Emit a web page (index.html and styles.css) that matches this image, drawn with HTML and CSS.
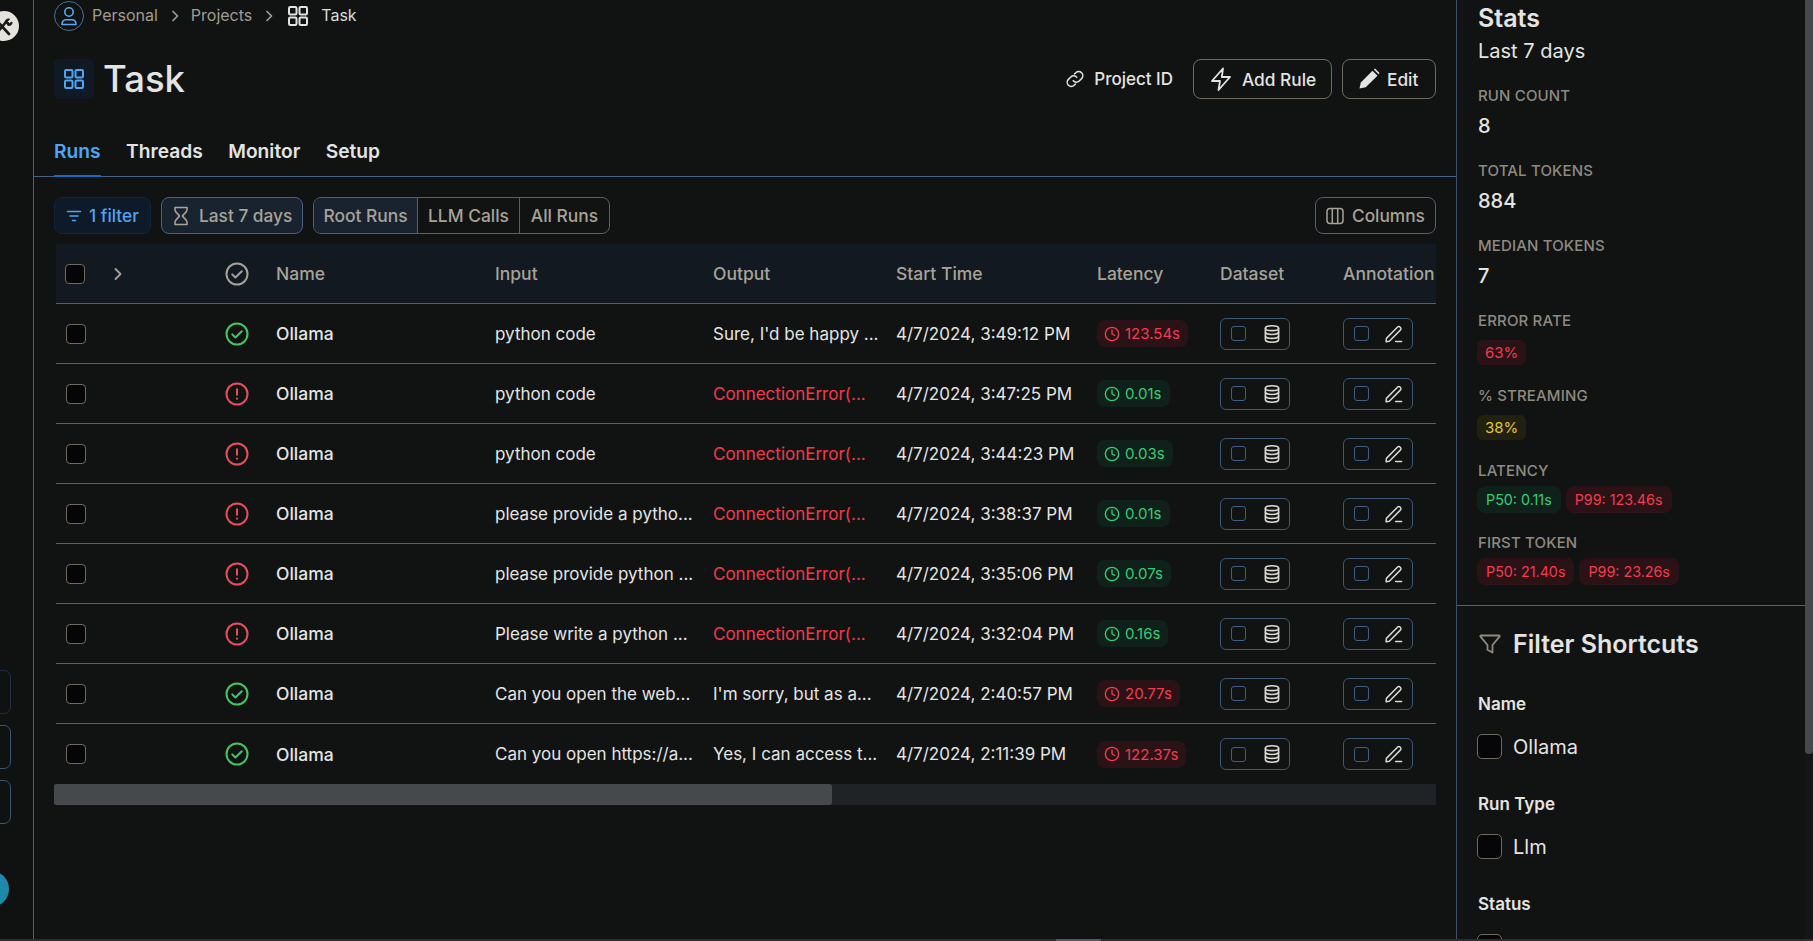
FILE: index.html
```html
<!DOCTYPE html>
<html lang="en">
<head>
<meta charset="utf-8">
<title>Task</title>
<link rel="stylesheet" href="styles.css">
</head>
<body>
<svg class="defs" width="0" height="0" aria-hidden="true">
  <symbol id="i-grid" viewBox="0 0 24 24" fill="none" stroke="currentColor" stroke-width="2" stroke-linejoin="round">
    <rect x="3" y="3" width="7.5" height="7.5" rx="1.2"/><rect x="13.5" y="3" width="7.5" height="7.5" rx="1.2"/><rect x="3" y="13.5" width="7.5" height="7.5" rx="1.2"/><rect x="13.5" y="13.5" width="7.5" height="7.5" rx="1.2"/>
  </symbol>
  <symbol id="i-check" viewBox="0 0 24 24" fill="none" stroke="currentColor" stroke-width="2" stroke-linecap="round" stroke-linejoin="round">
    <circle cx="12" cy="12" r="10.5"/><path d="M7.2 12.4l3.2 3.1 6.4-6.3"/>
  </symbol>
  <symbol id="i-alert" viewBox="0 0 24 24" fill="none" stroke="currentColor" stroke-width="2" stroke-linecap="round" stroke-linejoin="round">
    <circle cx="12" cy="12" r="10.5"/><path d="M12 7.2v5.6M12 16.6v.1"/>
  </symbol>
  <symbol id="i-clock" viewBox="0 0 24 24" fill="none" stroke="currentColor" stroke-width="2" stroke-linecap="round" stroke-linejoin="round">
    <circle cx="12" cy="12" r="10"/><path d="M12 6v6l4 2"/>
  </symbol>
  <symbol id="i-db" viewBox="0 0 16 18" fill="none" stroke="currentColor" stroke-width="1.6" stroke-linecap="round" stroke-linejoin="round">
    <ellipse cx="8" cy="3.2" rx="6.6" ry="2.4"/><path d="M1.4 3.2v11.6c0 1.3 3 2.4 6.6 2.4s6.6-1.1 6.6-2.4V3.2"/><path d="M1.4 7.1c0 1.3 3 2.4 6.6 2.4s6.6-1.1 6.6-2.4M1.4 11c0 1.3 3 2.4 6.6 2.4s6.6-1.1 6.6-2.4"/>
  </symbol>
  <symbol id="i-pen" viewBox="0 0 18 18" fill="none" stroke="currentColor" stroke-width="1.5" stroke-linecap="round" stroke-linejoin="round">
    <path d="M1.4 13.4L12.4 2.2a2 2 0 0 1 2.9 0 2 2 0 0 1 0 2.9L4.3 16.2l-3.2.6z"/><path d="M10.6 16.6h6"/>
  </symbol>
</svg>

<div class="app">
  <div class="workspace">
    <aside class="rail">
      <div class="rail-logo">
        <svg class="rail-tools" viewBox="0 0 20 20" fill="none" stroke="#1a1a1a" stroke-width="2.6" stroke-linecap="round"><path d="M2 18L12 6"/><path d="M3 5l12 13"/><path d="M11 6.5c0-2.5 2-4 4.500-3.500l-2 2.500 2 2 2.500-1.500c.4 2.500-1.500 4-4 3.500" fill="#1a1a1a" stroke-width="1"/></svg>
      </div>
      <div class="rail-stack">
        <div class="rail-box rail-box-dim"></div>
        <div class="rail-box"></div>
        <div class="rail-box"></div>
      </div>
      <div class="rail-avatar"></div>
    </aside>

    <main class="main">
      <div class="pad">
        <nav class="crumbs">
          <span class="crumb-avatar">
            <svg width="22" height="22" viewBox="0 0 22 22" fill="none" stroke="currentColor" stroke-width="1.6" stroke-linecap="round" stroke-linejoin="round"><circle cx="11" cy="7" r="4.200"/><path d="M4 19.500c0-3 1.500-4.800 4-4.800h6c2.500 0 4 1.800 4 4.800z"/></svg>
          </span>
          <span class="crumb">Personal</span>
          <svg class="crumb-sep" width="8" height="12" viewBox="0 0 8 12" fill="none" stroke="currentColor" stroke-width="1.700" stroke-linecap="round" stroke-linejoin="round"><path d="M2 1.500L6.500 6 2 10.500"/></svg>
          <span class="crumb">Projects</span>
          <svg class="crumb-sep" width="8" height="12" viewBox="0 0 8 12" fill="none" stroke="currentColor" stroke-width="1.700" stroke-linecap="round" stroke-linejoin="round"><path d="M2 1.500L6.500 6 2 10.500"/></svg>
          <svg class="crumb-grid" width="24" height="24"><use href="#i-grid"/></svg>
          <span class="crumb crumb-now">Task</span>
        </nav>

        <header class="title-row">
          <div class="title-left">
            <span class="title-icon"><svg width="24" height="24"><use href="#i-grid"/></svg></span>
            <h1 class="title">Task</h1>
          </div>
          <div class="title-actions">
            <span class="project-id">
              <svg width="20" height="20" viewBox="0 0 20 20" fill="none" stroke="currentColor" stroke-width="1.500" stroke-linecap="round" stroke-linejoin="round"><path d="M8.300 11.700a4 4 0 0 0 5.900.3l2.400-2.400a4.100 4.100 0 0 0-5.800-5.800L9.500 5"/><path d="M11.700 8.300a4 4 0 0 0-5.900-.3l-2.400 2.400a4.100 4.100 0 0 0 5.800 5.800l1.300-1.200"/></svg>
              Project ID
            </span>
            <button class="btn btn-add">
              <svg width="24" height="24" viewBox="0 0 24 24" fill="none" stroke="currentColor" stroke-width="1.800" stroke-linejoin="round" stroke-linecap="round"><path d="M14 1.500L3 14h8l-1.500 9L21 10h-8.200z"/></svg>
              Add Rule
            </button>
            <button class="btn btn-edit">
              <svg width="22" height="22" viewBox="0 0 22 22" fill="currentColor"><path d="M1.500 20.500l1.300-6L14.500 2.800l5 4.900L7.700 19.300z"/><path d="M15.800 1.600l1.200-1 4.500 4.500-1 1.200z"/></svg>
              Edit
            </button>
          </div>
        </header>
      </div>

      <nav class="tabs">
        <a class="tab tab-on">Runs</a>
        <a class="tab">Threads</a>
        <a class="tab">Monitor</a>
        <a class="tab">Setup</a>
      </nav>

      <div class="pad">
        <div class="toolbar">
          <div class="toolbar-left">
            <button class="chip chip-filter">
              <svg width="16" height="16" viewBox="0 0 16 16" fill="none" stroke="currentColor" stroke-width="1.500" stroke-linecap="round"><path d="M1.500 3.500h13M4 8h8M6.500 12.500h3"/></svg>
              1 filter
            </button>
            <button class="chip chip-time">
              <svg width="16" height="20" viewBox="0 0 16 20" fill="none" stroke="currentColor" stroke-width="1.600" stroke-linejoin="round"><path d="M2 1.500h12v2.500c0 2-3.500 4.300-4.500 6 1 1.700 4.500 4 4.500 6v2.500H2V16c0-2 3.500-4.300 4.500-6C5.500 8.300 2 6 2 4z"/></svg>
              Last 7 days
            </button>
            <div class="segment">
              <span class="seg seg-on">Root Runs</span>
              <span class="seg seg-llm">LLM Calls</span>
              <span class="seg seg-all">All Runs</span>
            </div>
          </div>
          <button class="chip chip-columns">
            <svg width="18" height="18" viewBox="0 0 18 18" fill="none" stroke="currentColor" stroke-width="1.500" stroke-linejoin="round"><rect x="1" y="1.500" width="16" height="15" rx="3"/><path d="M6.300 1.500v15M11.700 1.500v15"/></svg>
            Columns
          </button>
        </div>

        <div class="table">
          <div class="row row-head">
            <div class="c-select"><span class="cbox"></span></div>
            <div class="c-expand"><svg width="10" height="14" viewBox="0 0 10 14" fill="none" stroke="currentColor" stroke-width="1.800" stroke-linecap="round" stroke-linejoin="round"><path d="M2.500 2l5 5-5 5"/></svg></div>
            <div class="c-status"><svg width="24" height="24"><use href="#i-check"/></svg></div>
            <div>Name</div><div>Input</div><div>Output</div><div>Start Time</div><div>Latency</div><div>Dataset</div><div>Annotation</div>
          </div>

          <div class="row">
            <div class="c-select"><span class="cbox"></span></div><div></div>
            <div class="c-status ok"><svg width="24" height="24"><use href="#i-check"/></svg></div>
            <div class="c-name">Ollama</div><div>python code</div><div>Sure, I'd be happy ...</div><div>4/7/2024, 3:49:12 PM</div>
            <div><span class="pill pill-red"><svg width="16" height="16"><use href="#i-clock"/></svg>123.54s</span></div>
            <div><span class="act"><span class="act-box"></span><svg width="16" height="18"><use href="#i-db"/></svg></span></div>
            <div><span class="act"><span class="act-box"></span><svg width="18" height="18"><use href="#i-pen"/></svg></span></div>
          </div>
          <div class="row">
            <div class="c-select"><span class="cbox"></span></div><div></div>
            <div class="c-status bad"><svg width="24" height="24"><use href="#i-alert"/></svg></div>
            <div class="c-name">Ollama</div><div>python code</div><div class="c-err">ConnectionError(...</div><div>4/7/2024, 3:47:25 PM</div>
            <div><span class="pill pill-green"><svg width="16" height="16"><use href="#i-clock"/></svg>0.01s</span></div>
            <div><span class="act"><span class="act-box"></span><svg width="16" height="18"><use href="#i-db"/></svg></span></div>
            <div><span class="act"><span class="act-box"></span><svg width="18" height="18"><use href="#i-pen"/></svg></span></div>
          </div>
          <div class="row">
            <div class="c-select"><span class="cbox"></span></div><div></div>
            <div class="c-status bad"><svg width="24" height="24"><use href="#i-alert"/></svg></div>
            <div class="c-name">Ollama</div><div>python code</div><div class="c-err">ConnectionError(...</div><div>4/7/2024, 3:44:23 PM</div>
            <div><span class="pill pill-green"><svg width="16" height="16"><use href="#i-clock"/></svg>0.03s</span></div>
            <div><span class="act"><span class="act-box"></span><svg width="16" height="18"><use href="#i-db"/></svg></span></div>
            <div><span class="act"><span class="act-box"></span><svg width="18" height="18"><use href="#i-pen"/></svg></span></div>
          </div>
          <div class="row">
            <div class="c-select"><span class="cbox"></span></div><div></div>
            <div class="c-status bad"><svg width="24" height="24"><use href="#i-alert"/></svg></div>
            <div class="c-name">Ollama</div><div>please provide a pytho...</div><div class="c-err">ConnectionError(...</div><div>4/7/2024, 3:38:37 PM</div>
            <div><span class="pill pill-green"><svg width="16" height="16"><use href="#i-clock"/></svg>0.01s</span></div>
            <div><span class="act"><span class="act-box"></span><svg width="16" height="18"><use href="#i-db"/></svg></span></div>
            <div><span class="act"><span class="act-box"></span><svg width="18" height="18"><use href="#i-pen"/></svg></span></div>
          </div>
          <div class="row">
            <div class="c-select"><span class="cbox"></span></div><div></div>
            <div class="c-status bad"><svg width="24" height="24"><use href="#i-alert"/></svg></div>
            <div class="c-name">Ollama</div><div>please provide python ...</div><div class="c-err">ConnectionError(...</div><div>4/7/2024, 3:35:06 PM</div>
            <div><span class="pill pill-green"><svg width="16" height="16"><use href="#i-clock"/></svg>0.07s</span></div>
            <div><span class="act"><span class="act-box"></span><svg width="16" height="18"><use href="#i-db"/></svg></span></div>
            <div><span class="act"><span class="act-box"></span><svg width="18" height="18"><use href="#i-pen"/></svg></span></div>
          </div>
          <div class="row">
            <div class="c-select"><span class="cbox"></span></div><div></div>
            <div class="c-status bad"><svg width="24" height="24"><use href="#i-alert"/></svg></div>
            <div class="c-name">Ollama</div><div>Please write a python ...</div><div class="c-err">ConnectionError(...</div><div>4/7/2024, 3:32:04 PM</div>
            <div><span class="pill pill-green"><svg width="16" height="16"><use href="#i-clock"/></svg>0.16s</span></div>
            <div><span class="act"><span class="act-box"></span><svg width="16" height="18"><use href="#i-db"/></svg></span></div>
            <div><span class="act"><span class="act-box"></span><svg width="18" height="18"><use href="#i-pen"/></svg></span></div>
          </div>
          <div class="row">
            <div class="c-select"><span class="cbox"></span></div><div></div>
            <div class="c-status ok"><svg width="24" height="24"><use href="#i-check"/></svg></div>
            <div class="c-name">Ollama</div><div>Can you open the web...</div><div>I'm sorry, but as a...</div><div>4/7/2024, 2:40:57 PM</div>
            <div><span class="pill pill-red"><svg width="16" height="16"><use href="#i-clock"/></svg>20.77s</span></div>
            <div><span class="act"><span class="act-box"></span><svg width="16" height="18"><use href="#i-db"/></svg></span></div>
            <div><span class="act"><span class="act-box"></span><svg width="18" height="18"><use href="#i-pen"/></svg></span></div>
          </div>
          <div class="row">
            <div class="c-select"><span class="cbox"></span></div><div></div>
            <div class="c-status ok"><svg width="24" height="24"><use href="#i-check"/></svg></div>
            <div class="c-name">Ollama</div><div>Can you open https://a...</div><div>Yes, I can access t...</div><div>4/7/2024, 2:11:39 PM</div>
            <div><span class="pill pill-red"><svg width="16" height="16"><use href="#i-clock"/></svg>122.37s</span></div>
            <div><span class="act"><span class="act-box"></span><svg width="16" height="18"><use href="#i-db"/></svg></span></div>
            <div><span class="act"><span class="act-box"></span><svg width="18" height="18"><use href="#i-pen"/></svg></span></div>
          </div>
        </div>

        <div class="hscroll"><div class="hscroll-thumb"></div></div>
      </div>
    </main>

    <aside class="panel">
      <section class="stats">
        <h2 class="stats-title">Stats</h2>
        <p class="stats-sub">Last 7 days</p>
        <div class="stat"><div class="stat-label">Run Count</div><div class="stat-value">8</div></div>
        <div class="stat"><div class="stat-label">Total Tokens</div><div class="stat-value">884</div></div>
        <div class="stat"><div class="stat-label">Median Tokens</div><div class="stat-value">7</div></div>
        <div class="stat"><div class="stat-label">Error Rate</div><div class="badges"><span class="badge badge-red">63%</span></div></div>
        <div class="stat stat-streaming"><div class="stat-label">% Streaming</div><div class="badges"><span class="badge badge-yellow">38%</span></div></div>
        <div class="stat stat-tight stat-streaming"><div class="stat-label">Latency</div><div class="badges"><span class="badge badge-tall badge-green">P50: 0.11s</span><span class="badge badge-tall badge-red">P99: 123.46s</span></div></div>
        <div class="stat stat-tight"><div class="stat-label">First Token</div><div class="badges"><span class="badge badge-tall badge-red">P50: 21.40s</span><span class="badge badge-tall badge-red">P99: 23.26s</span></div></div>
      </section>
      <section class="shortcuts">
        <h2 class="shortcuts-title">
          <svg width="24" height="24" viewBox="0 0 24 24" fill="none" stroke="currentColor" stroke-width="1.800" stroke-linejoin="round"><path d="M3 3.500h18c.600 0 .900.700.500 1.200L14.500 13v7.500l-5-2.800V13L2.500 4.700c-.4-.5-.1-1.200.500-1.200z"/></svg>
          <span>Filter Shortcuts</span>
        </h2>
        <div class="group"><div class="group-name">Name</div><label class="opt"><span class="opt-box"></span>Ollama</label></div>
        <div class="group"><div class="group-name">Run Type</div><label class="opt"><span class="opt-box"></span>Llm</label></div>
        <div class="group"><div class="group-name">Status</div><label class="opt"><span class="opt-box"></span>Error</label></div>
      </section>
    </aside>

    <div class="vscroll"><div class="vscroll-thumb"></div></div>
  </div>
  <div class="bottom-bar"><div class="bottom-thumb"></div></div>
</div>
</body>
</html>
```

FILE: styles.css
```css
* { box-sizing: border-box; }
html, body { margin: 0; height: 100%; overflow: hidden; }
body { background: #111313; color: #e4e4e2; font-family: Inter, "Noto Sans", sans-serif; font-size: 16px; }
button { font: inherit; color: inherit; background: none; cursor: pointer; }
h1, h2, p { margin: 0; }
svg { flex: none; }
.defs { position: absolute; }

.app { height: 941px; display: flex; flex-direction: column; }
.workspace { flex: 1; min-height: 0; display: flex; overflow: hidden; }

/* left rail, clipped by the window edge */
.rail { width: 34px; flex: none; border-right: 1px solid #4a6085; overflow: hidden; display: flex; flex-direction: column; background: #101211; }
.rail-logo { width: 30px; height: 30px; margin: 11px 0 0 -11px; flex: none; border-radius: 50%; background: #e6e3dc; display: flex; align-items: center; justify-content: center; }
.rail-tools { width: 20px; height: 20px; }
.rail-stack { margin-top: 629px; margin-left: -30px; display: flex; flex-direction: column; gap: 11px; }
.rail-box { width: 41px; height: 44px; border: 1px solid #3d5472; border-radius: 7px; }
.rail-box-dim { border-color: #222f42; }
.rail-avatar { width: 36px; height: 36px; margin: 47px 0 0 -27px; flex: none; border-radius: 50%; background: linear-gradient(135deg, #2f86c4, #178a9c); }

/* main column */
.main { width: 1423px; flex: none; border-right: 1px solid #3c4f6d; min-width: 0; }
.pad { padding: 0 20px; }

.crumbs { height: 32px; display: flex; align-items: center; color: #a29c90; }
.crumb { margin-top: -2px; }
.crumb-avatar { width: 30px; height: 30px; border: 1px solid #4a6f9c; border-radius: 50%; color: #5aa7ee; display: flex; align-items: center; justify-content: center; margin-right: 8px; }
.crumb-sep { margin: 0 12px 0 13px; }
.crumb-grid { color: #e4e4e2; margin: 0 11px 0 1px; }
.crumb-now { color: #dcdcda; }

.title-row { margin-top: 27px; height: 40px; display: flex; justify-content: space-between; align-items: center; }
.title-left { display: flex; align-items: center; gap: 9px; }
.title-icon { width: 40px; height: 40px; border-radius: 6px; background: #111a24; color: #4ea5f5; display: flex; align-items: center; justify-content: center; }
.title { font-size: 36.5px; font-weight: 500; line-height: 40px; }
.title-actions { display: flex; align-items: center; gap: 10px; font-size: 17px; font-weight: 500; }
.project-id { display: flex; align-items: center; gap: 9px; margin-right: 10px; }
.btn { height: 40px; border: 1px solid #6f6a60; border-radius: 8px; display: flex; align-items: center; gap: 9px; padding: 0 15px; color: #e4e4e2; font-size: 17.3px; }
.btn-add { width: 139px; white-space: nowrap; }
.btn-edit { width: 94px; gap: 7px; }

.tabs { height: 78px; border-bottom: 1px solid #4a6085; padding: 0 20px; display: flex; gap: 25.5px; align-items: flex-end; font-size: 19.2px; font-weight: 600; }
.tab { height: 53px; margin-bottom: -1px; display: flex; align-items: center; padding-top: 3px; border-bottom: 2px solid transparent; color: #e4e4e2; }
.tab-on { color: #4ea5f5; border-bottom-color: #1568c4; }

.toolbar { margin-top: 20px; height: 37px; display: flex; justify-content: space-between; color: #a8a296; font-size: 17.3px; font-weight: 500; }
.toolbar-left { display: flex; gap: 10px; }
.chip { height: 37px; border: 1px solid #4a6085; border-radius: 8px; display: flex; align-items: center; gap: 8px; padding: 0 10px; color: inherit; font-weight: 500; white-space: nowrap; }
.chip-filter { width: 97px; background: #0e1a27; border-color: #11263c; color: #4ea5f5; gap: 7px; padding: 0 11px; }
.chip-time { width: 142px; background: #192330; gap: 10px; padding: 0 11px; }
.chip-columns { width: 121px; gap: 8px; }
.segment { display: flex; height: 37px; border: 1px solid #4a6085; border-radius: 8px; overflow: hidden; font-size: 17.4px; }
.seg { display: flex; align-items: center; justify-content: center; width: 103px; border-left: 1px solid #4a6085; }
.seg:first-child { border-left: 0; }
.seg-llm { width: 102px; }
.seg-all { width: 90px; }
.seg-on { background: #192330; }

.table { margin: 10px 0 0 2px; font-size: 17px; }
.row { height: 60px; display: grid; grid-template-columns: 57px 112px 51px 219px 218px 183px 201px 123px 123px 93px; align-items: center; border-bottom: 1px solid #4a6085; white-space: nowrap; }
.row:last-child { border-bottom: 0; }
.row-head { background: #121920; color: #a8a296; font-size: 17.5px; font-weight: 500; }
.c-select { padding-left: 10px; display: flex; }
.row-head .c-select { padding-left: 9px; }
.cbox { width: 20px; height: 20px; border: 1px solid #6f6a60; border-radius: 4px; background: #050507; }
.c-expand { display: flex; }
.c-status { display: flex; }
.ok { color: #40c860; }
.bad { color: #ea4c5c; }
.c-name { font-size: 17.5px; font-weight: 500; }
.c-err { color: #f03a4a; }

.pill { display: inline-flex; align-items: center; gap: 5px; height: 27px; padding: 0 8px 0 7px; border-radius: 8px; font-size: 15px; }
.pill-red { background: #2a1216; color: #f23c50; }
.pill-green { background: #10201a; color: #30cf78; }
.act { width: 70px; height: 32px; border: 1px solid #3e5876; border-radius: 6px; display: inline-flex; align-items: center; justify-content: space-between; padding: 0 9px 0 10px; color: #d8d6d0; vertical-align: middle; }
.act-box { width: 15px; height: 15px; border: 1px solid #3e5e85; border-radius: 3px; }

.hscroll { height: 21px; background: #1f2325; }
.hscroll-thumb { width: 778px; height: 100%; background: #45494b; border-radius: 3px; }

/* right panel */
.panel { width: 348px; flex: none; overflow: hidden; }
.stats { height: 606px; border-bottom: 1px solid #4a6085; padding: 0 20px 0 21px; }
.stats-title { font-size: 25px; font-weight: 600; line-height: 36px; }
.stats-sub { font-size: 20px; line-height: 30px; }
.stat { margin-top: 20px; }
.stat-label { font-size: 15px; line-height: 20px; letter-spacing: .15px; text-transform: uppercase; color: #8f8a80; font-weight: 500; }
.stat-value { font-size: 20px; line-height: 30px; font-weight: 500; margin-top: 5px; }
.badges { display: flex; gap: 5px; margin-top: 9px; margin-left: -1px; }
.badge { height: 25px; display: inline-flex; align-items: center; padding: 0 8px; border-radius: 6px; font-size: 15px; }
.badge-tall { height: 27px; border-radius: 8px; padding: 0 9px; font-size: 14.3px; }
.stat-streaming { margin-top: 21px; }
.stat-tight .badges { margin-top: 5px; }
.badge-red { background: #2a1216; color: #f23c50; }
.badge-green { background: #10201a; color: #30cf78; }
.badge-yellow { background: #22200f; color: #e6c72a; }

.shortcuts { padding: 0 20px 0 21px; }
.shortcuts-title { display: flex; align-items: center; gap: 11px; font-size: 25px; font-weight: 600; height: 36px; margin-top: 20px; }
.shortcuts-title svg { color: #8f8a80; }
.group { margin-top: 30px; }
.group + .group { margin-top: 33px; }
.group-name { font-size: 17px; font-weight: 600; line-height: 24px; }
.opt { display: flex; align-items: center; gap: 11px; font-size: 20px; margin-top: 18px; height: 25px; }
.opt-box { width: 25px; height: 25px; border: 1px solid #6f6a60; border-radius: 5px; background: #060608; margin-left: -1px; }

.vscroll { width: 8px; flex: none; background: #131516; }
.vscroll-thumb { height: 754px; background: #45494b; border-radius: 0 0 4px 4px; }

.bottom-bar { height: 2px; flex: none; background: #2b2d2e; }
.bottom-thumb { width: 45px; height: 100%; margin-left: 1056px; background: #55585a; }
```
